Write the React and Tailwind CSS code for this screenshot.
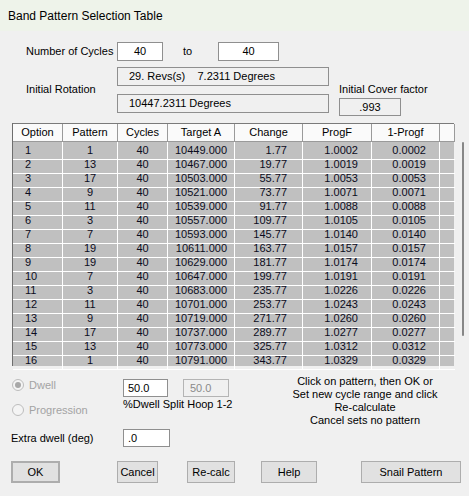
const rows = [
  [1, 1, '10449.000', '1.77', '1.0002', '0.0002'],
  [2, 13, '10467.000', '19.77', '1.0019', '0.0019'],
  [3, 17, '10503.000', '55.77', '1.0053', '0.0053'],
  [4, 9, '10521.000', '73.77', '1.0071', '0.0071'],
  [5, 11, '10539.000', '91.77', '1.0088', '0.0088'],
  [6, 3, '10557.000', '109.77', '1.0105', '0.0105'],
  [7, 7, '10593.000', '145.77', '1.0140', '0.0140'],
  [8, 19, '10611.000', '163.77', '1.0157', '0.0157'],
  [9, 19, '10629.000', '181.77', '1.0174', '0.0174'],
  [10, 7, '10647.000', '199.77', '1.0191', '0.0191'],
  [11, 3, '10683.000', '235.77', '1.0226', '0.0226'],
  [12, 11, '10701.000', '253.77', '1.0243', '0.0243'],
  [13, 9, '10719.000', '271.77', '1.0260', '0.0260'],
  [14, 17, '10737.000', '289.77', '1.0277', '0.0277'],
  [15, 13, '10773.000', '325.77', '1.0312', '0.0312'],
  [16, 1, '10791.000', '343.77', '1.0329', '0.0329'],
];

const headers = ['Option', 'Pattern', 'Cycles', 'Target A', 'Change', 'ProgF', '1-Progf', ''];

function Radio({ checked, label }) {
  return (
    <div className="flex items-center h-[14px]">
      <span className="w-[12px] h-[12px] rounded-full border border-[#bdbdbd] bg-[#f4f4f4] flex items-center justify-center">
        {checked && <span className="w-[6px] h-[6px] rounded-full bg-[#a8a8a8]" />}
      </span>
      <span className="ml-[5px] text-[#a3a3a3]">{label}</span>
    </div>
  );
}

function Button({ children, className = '' }) {
  return (
    <button
      type="button"
      className={`h-[22px] bg-[#e1e1e1] border border-[#adadad] text-[11px] text-black ${className}`}
    >
      {children}
    </button>
  );
}

export default function App() {
  return (
    <div className="w-[469px] h-[496px] bg-[#f0f0f0] text-[11px] text-black overflow-hidden font-['Tahoma','Liberation_Sans',sans-serif]">
      {/* Title bar */}
      <div className="h-[31px] bg-[#eef3ea] flex items-center pl-[8px] text-[12px] font-['Liberation_Sans',sans-serif]">
        Band Pattern Selection Table
      </div>

      {/* Cycles */}
      <div className="flex items-center mt-[11px] h-[19px] pl-[26px]">
        <span className="w-[91px]">Number of Cycles</span>
        <div className="w-[46px] h-[19px] bg-white border border-[#8f8f8f] flex items-center justify-center">40</div>
        <span className="ml-[20px] w-[35px]">to</span>
        <div className="w-[61px] h-[19px] bg-white border border-[#8f8f8f] flex items-center justify-center">40</div>
      </div>

      {/* Rotation */}
      <div className="flex mt-[6px] h-[46px]">
        <div className="w-[117px] pl-[26px] flex items-center pb-[2px]">Initial Rotation</div>
        <div className="w-[212px] flex flex-col">
          <div className="h-[19px] border border-[#8f8f8f] flex items-center pl-[11px] whitespace-pre">29. Revs(s)    7.2311 Degrees</div>
          <div className="h-[19px] mt-[8px] border border-[#8f8f8f] flex items-center pl-[11px]">10447.2311 Degrees</div>
        </div>
        <div className="ml-[10px] flex flex-col pt-[15px]">
          <span className="leading-[14px]">Initial Cover factor</span>
          <div className="w-[62px] h-[18px] mt-[2px] border border-[#8f8f8f] flex items-center justify-center">.993</div>
        </div>
      </div>

      {/* Table */}
      <div className="flex mt-[10px] ml-[12px] h-[243px]">
        <div className="w-[442px] flex flex-col border-l border-[#6e6e6e]">
          <div className="grid grid-cols-[50px_55px_50px_67px_68px_69px_68px_15px] border-t border-[#7a7a7a] h-[19px]">
            {headers.map((h, i) => (
              <div
                key={i}
                className="bg-[#fafafa] border-r border-b border-[#9a9a9a] flex items-center justify-center"
              >
                {h}
              </div>
            ))}
          </div>
          <div className="bg-[#c0c0c0] text-[#0c0c20]">
            {rows.map((r) => (
              <div key={r[0]} className="grid grid-cols-[50px_55px_50px_67px_68px_69px_68px_15px] h-[14px]">
                <div className="border-r border-b border-white pl-[12px] flex items-center">{r[0]}</div>
                <div className="border-r border-b border-white flex items-center justify-center">{r[1]}</div>
                <div className="border-r border-b border-white flex items-center justify-center">40</div>
                <div className="border-r border-b border-white flex items-center justify-end pr-[7px]">{r[2]}</div>
                <div className="border-r border-b border-white flex items-center justify-end pr-[15px]">{r[3]}</div>
                <div className="border-r border-b border-white flex items-center justify-end pr-[13px]">{r[4]}</div>
                <div className="border-r border-b border-white flex items-center justify-end pr-[13px]">{r[5]}</div>
                <div className="border-b border-white" />
              </div>
            ))}
          </div>
        </div>
        <div className="w-[13px] flex justify-end pr-[3px] pt-[19px]">
          <div className="w-[2px] h-[194px] bg-[#878787] rounded-full" />
        </div>
      </div>

      {/* Bottom controls */}
      <div className="flex">
        <div className="w-[280px] flex flex-col">
          <div className="flex">
            <div className="w-[123px] pl-[12px] flex flex-col">
              <div className="mt-[12px]"><Radio checked label="Dwell" /></div>
              <div className="mt-[11px]"><Radio label="Progression" /></div>
            </div>
            <div className="flex flex-col mt-[13px]">
              <div className="flex">
                <div className="w-[45px] h-[18px] bg-white border border-[#8f8f8f] flex items-center pl-[4px]">50.0</div>
                <div className="ml-[15px] w-[46px] h-[18px] border border-[#b4b4b4] flex items-center pl-[6px] text-[#8a8a8a]">50.0</div>
              </div>
              <span className="mt-[1px] leading-[13px]">%Dwell Split Hoop 1-2</span>
            </div>
          </div>
          <div className="flex items-center mt-[12px] pl-[11px]">
            <span className="w-[112px]">Extra dwell (deg)</span>
            <div className="w-[47px] h-[18px] bg-white border border-[#8f8f8f] flex items-center pl-[4px]">.0</div>
          </div>
        </div>
        <div className="w-[170px] text-center leading-[13px] pt-[9px]">
          <div>Click on pattern, then OK or</div>
          <div>Set new cycle range and click</div>
          <div>Re-calculate</div>
          <div>Cancel sets no pattern</div>
        </div>
      </div>

      {/* Buttons */}
      <div className="flex mt-[14px]">
        <Button className="ml-[11px] w-[49px] border-[#4a4a4a] border-2">OK</Button>
        <Button className="ml-[57px] w-[41px]">Cancel</Button>
        <Button className="ml-[29px] w-[48px]">Re-calc</Button>
        <Button className="ml-[26px] w-[56px]">Help</Button>
        <Button className="ml-[44px] w-[100px]">Snail Pattern</Button>
      </div>
    </div>
  );
}
